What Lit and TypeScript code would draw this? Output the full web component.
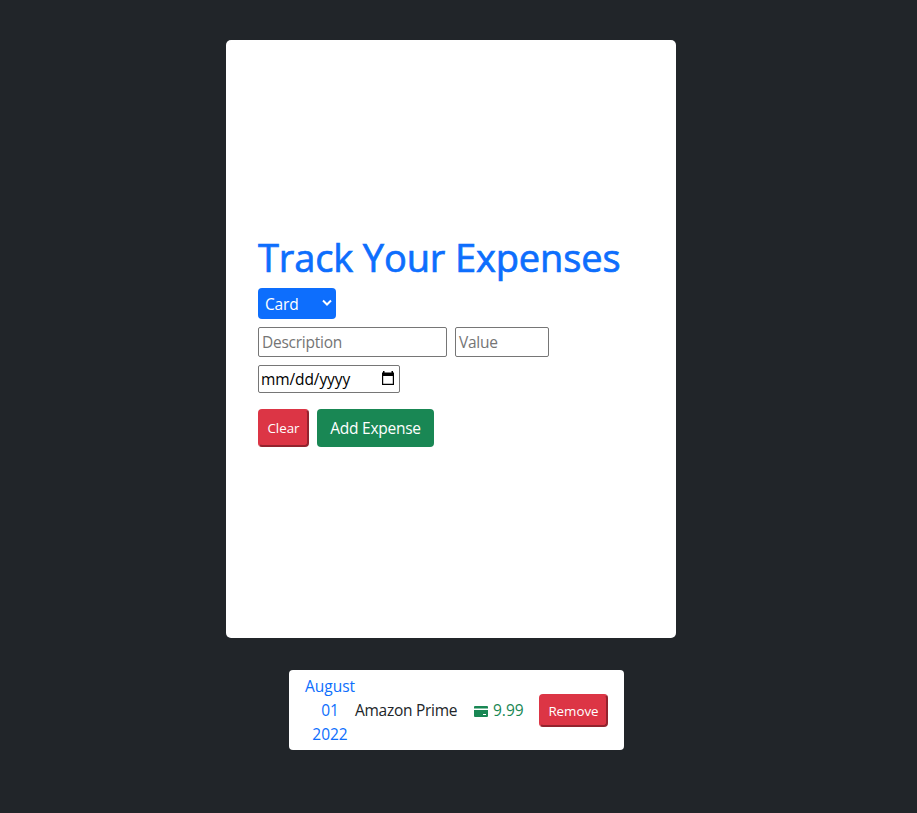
import { LitElement, html, css } from "lit";
import { customElement } from "lit/decorators.js";

@customElement("app-root")
export class AppRoot extends LitElement {
  static styles = css`
    :host {
      display: flex;
      flex-direction: column;
      align-items: flex-start;
      box-sizing: border-box;
      height: 813px;
      padding-top: 40px;
      overflow: hidden;
      background: #212529;
      color: #212529;
      font: 400 16px/24px "Open Sans", "Noto Sans", sans-serif;
    }
    * { box-sizing: border-box; }
    .panel {
      display: flex;
      flex-direction: column;
      justify-content: center;
      align-items: flex-start;
      width: 450px;
      height: 598px;
      margin-left: 226px;
      padding: 2px 32px 0;
      border-radius: 5px;
      background: #fff;
    }
    h1 {
      margin: 0 0 8px;
      font-size: 38px;
      font-weight: 500;
      line-height: 46px;
      letter-spacing: -0.13px;
      -webkit-text-stroke: 0.7px #0d6efd;
      white-space: nowrap;
      color: #0d6efd;
    }
    .select {
      display: flex;
      align-items: center;
      justify-content: space-between;
      width: 78px;
      height: 31px;
      padding: 1px 4px 0 7px;
      border-radius: 4px;
      background: #0d6efd;
      color: #fff;
      font-size: 15.5px;
      letter-spacing: -0.15px;
    }
    .select svg { margin-top: -1px; }
    .row { display: flex; gap: 8px; margin-top: 8px; }
    .field {
      display: flex;
      align-items: center;
      justify-content: space-between;
      height: 30px;
      padding: 0 3px 0 3px;
      border: 1px solid #767676;
      border-radius: 2px;
      color: #757575;
      font-size: 15.5px;
      letter-spacing: -0.25px;
    }
    .description { width: 189px; }
    .value { width: 94px; }
    .date { width: 142px; height: 28px; padding: 0 4px 0 2px; color: #000; letter-spacing: -0.1px; }
    .actions { margin-top: 16px; }
    button {
      margin: 0;
      padding: 0;
      color: #fff;
      font-family: inherit;
      white-space: nowrap;
    }
    .danger {
      border: 2px solid;
      border-radius: 4px;
      border-color: #dc3545 #93232e #93232e #dc3545;
      background: #dc3545;
      font-size: 13.333px;
    }
    .clear { width: 51px; height: 38px; }
    .add {
      width: 117px;
      height: 38px;
      border: 0;
      border-radius: 4px;
      background: #198754;
      font-size: 15.5px;
      letter-spacing: -0.25px;
    }
    .expense {
      display: flex;
      align-items: center;
      width: 335px;
      height: 80px;
      margin: 32px 0 0 289px;
      padding: 0 16px;
      border-radius: 4px;
      background: #fff;
      font-size: 15.5px;
      white-space: nowrap;
    }
    .when { flex: none; width: 50px; text-align: center; color: #0d6efd; }
    .name { flex: none; width: 103px; letter-spacing: -0.27px; }
    .amount {
      display: flex;
      flex: none;
      align-items: center;
      width: 49px;
      margin: 0 16px;
      gap: 5px;
      color: #198754;
    }
    .amount svg { margin-top: 3px; }
    .remove { flex: none; width: 69px; height: 33px; padding-top: 1px; }
    svg { display: block; flex: none; }
  `;

  render() {
    return html`
      <section class="panel">
        <h1>Track Your Expenses</h1>
        <div class="select">
          <span>Card</span>
          <svg width="10" height="8" viewBox="0 0 10 8" fill="none" stroke="#fff" stroke-width="2"><path d="M1 1.5 5 5.5 9 1.5" /></svg>
        </div>
        <div class="row">
          <div class="field description"><span>Description</span></div>
          <div class="field value"><span>Value</span></div>
        </div>
        <div class="row">
          <div class="field date">
            <span>mm/dd/yyyy</span>
            <svg width="14" height="16" viewBox="0 0 14 16"><path fill="#000" d="M2 0h1.500v1.500h7V0H12v1.500h1V14H1V1.500h1zM2.200 5v7.800h9.600V5z" fill-rule="evenodd" /></svg>
          </div>
        </div>
        <div class="row actions">
          <button class="danger clear">Clear</button>
          <button class="add">Add Expense</button>
        </div>
      </section>
      <section class="expense">
        <div class="when"><div>August</div><div>01</div><div>2022</div></div>
        <div class="name">Amazon Prime</div>
        <div class="amount">
          <svg width="14" height="12" viewBox="0 0 14 12"><path fill="#198754" fill-rule="evenodd" d="M1 0h12q1 0 1 1v1.500H0V1q0-1 1-1zM0 4h14v6q0 1-1 1H1q-1 0-1-1zM9 8v1h3V8z" /></svg>
          <span>9.99</span>
        </div>
        <button class="danger remove">Remove</button>
      </section>
    `;
  }
}
